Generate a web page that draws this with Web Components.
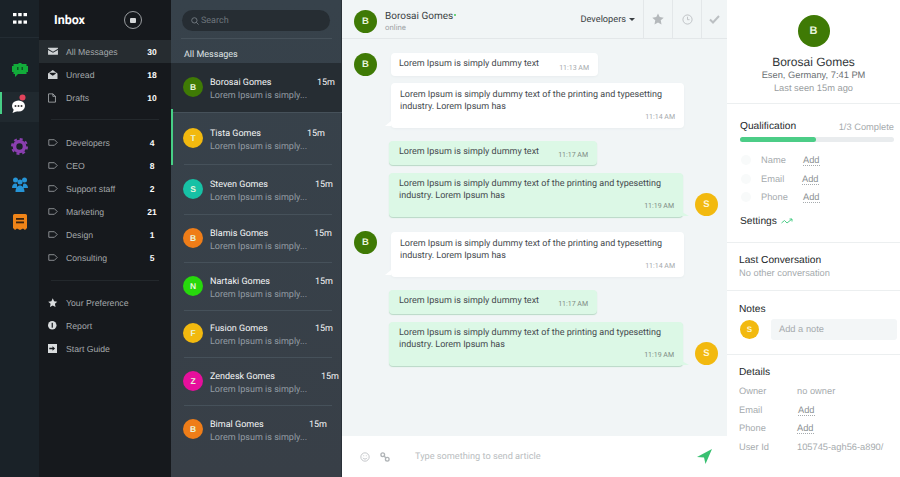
<!DOCTYPE html>
<html>
<head>
<meta charset="utf-8">
<title>Inbox</title>
<style>
  html, body { margin: 0; height: 100%; overflow: hidden; }
  body { font-family: Roboto, "Liberation Sans", sans-serif; text-rendering: geometricPrecision; }
</style>
</head>
<body>
<inbox-app></inbox-app>
<script>
const ICONS = {
  mail: `<svg viewBox="0 0 14 12" width="10" height="8.500"><path fill="#cfd2d4" d="M0 1h14v1.600L7 6.600 0 2.600zM0 4.200l7 4 7-4V11H0z"/></svg>`,
  open: `<svg viewBox="0 0 14 14" width="9.500" height="9.500"><path fill="#cfd2d4" d="M7 0l7 5v8.500H0V5zM2.600 5.600L7 8.300l4.400-2.700V4.200H2.600z"/></svg>`,
  draft: `<svg viewBox="0 0 12 14" width="8" height="10"><path fill="none" stroke="#cfd2d4" d="M.8.800h6.500l3.900 3.700v8.700H.8zM7.300.8v3.700h3.900"/></svg>`,
  tag: `<svg viewBox="0 0 14 10" width="10" height="7"><path fill="none" stroke="#a8acaf" stroke-width="1.100" d="M1 1h8l4 4-4 4H1z"/></svg>`,
  star: `<svg viewBox="0 0 14 14" width="9.500" height="9.500"><path fill="#d9dcde" d="M7 .5l2 4.300 4.700.6-3.500 3.200.9 4.700L7 11l-4.100 2.300.9-4.700L.3 5.400 5 4.800z"/></svg>`,
  info: `<svg viewBox="0 0 14 14" width="8.500" height="8.500"><circle cx="7" cy="7" r="7" fill="#d9dcde"/><rect x="6" y="3" width="2" height="8" fill="#16191d"/></svg>`,
  guide: `<svg viewBox="0 0 14 14" width="9" height="9"><path fill="#d9dcde" d="M0 0h14v14H0z"/><path fill="#16191d" d="M2 6h5V3.500L11 7l-4 3.500V8H2z"/></svg>`
};

// small round letter badge
customElements.define("letter-avatar", class extends HTMLElement {
  constructor() {
    super();
    this.attachShadow({ mode: "open" }).innerHTML = `
      <style>
        :host {
          display: flex; align-items: center; justify-content: center;
          flex: none; border-radius: 50%; color: #e8f5dc; font-weight: 700;
          font-family: "Liberation Sans", sans-serif;
          width: var(--size, 20px); height: var(--size, 20px);
          font-size: var(--font, 9px); background: var(--bg, #3f7a05);
        }
      </style><slot></slot>`;
  }
});

customElements.define("icon-rail", class extends HTMLElement {
  constructor() {
    super();
    this.attachShadow({ mode: "open" }).innerHTML = `
      <style>
        :host { display: flex; flex-direction: column; width: 39px; flex: none; background: #1a2228; }
        .grid { height: 37px; display: flex; align-items: center; justify-content: center; border-bottom: 1px solid #232c33; }
        .item { display: flex; align-items: center; justify-content: center; height: 30px; }
        .cur { margin: -1px 0 1px; background: #20292f linear-gradient(#47cf86, #47cf86) no-repeat 0 0 / 2px 22px; }
        .cur svg { margin-top: -7px; }
        .list { display: flex; flex-direction: column; gap: 8px; padding-top: 17px; }
      </style>
      <div class="grid">
        <svg width="14" height="11" viewBox="0 0 14 11" fill="#fff">
          <rect width="3.500" height="3.200"/><rect x="5.200" width="3.500" height="3.200"/><rect x="10.500" width="3.500" height="3.200"/>
          <rect y="7.500" width="3.500" height="3.200"/><rect x="5.200" y="7.500" width="3.500" height="3.200"/><rect x="10.500" y="7.500" width="3.500" height="3.200"/>
        </svg>
      </div>
      <div class="list">
        <div class="item">
          <svg width="16" height="14" viewBox="0 0 16 14"><path fill="#12ab3a" d="M1.500 1h5V0h3v1h5v2H16v6h-1.500v2H6l-3 3v-3H1.500V9H0V3h1.500z"/><rect x="5" y="4" width="1.500" height="3" fill="#0a5a20"/><rect x="9.500" y="4" width="1.500" height="3" fill="#0a5a20"/></svg>
        </div>
        <div class="item cur">
          <svg width="17" height="20" viewBox="0 0 17 20">
            <ellipse cx="7.500" cy="12" rx="6.500" ry="5.500" fill="#fff"/><path fill="#fff" d="M3 15l-1.500 4 5-2z"/>
            <circle cx="4.500" cy="12" r="1" fill="#333"/><circle cx="7.500" cy="12" r="1" fill="#333"/><circle cx="10.500" cy="12" r="1" fill="#333"/>
            <circle cx="11.500" cy="3.500" r="3" fill="#e2435b"/>
          </svg>
        </div>
        <div class="item">
          <svg width="17" height="17" viewBox="0 0 17 17"><circle cx="8.500" cy="8.500" r="5" fill="none" stroke="#8a3fb0" stroke-width="3.600"/><circle cx="8.500" cy="8.500" r="7.500" fill="none" stroke="#8a3fb0" stroke-width="2" stroke-dasharray="3 2.890"/></svg>
        </div>
        <div class="item">
          <svg width="16" height="15" viewBox="0 0 16 15" fill="#2694d6"><circle cx="3.500" cy="3" r="2.500"/><circle cx="12.500" cy="3" r="2.500"/><circle cx="8" cy="5" r="2.500"/><path d="M0 11c0-3 1.500-4.500 3.500-4.500S5 7.500 5 9v2zM11 9c0-1.500 0-2.500 1.500-2.500S16 8 16 11h-5zM3.500 15c0-4 2-6.500 4.500-6.500S12.500 11 12.500 15z"/></svg>
        </div>
        <div class="item">
          <svg width="14" height="17" viewBox="0 0 14 17"><path fill="#ef8418" d="M0 1.500A1.500 1.500 0 0 1 1.500 0h11A1.500 1.500 0 0 1 14 1.500V14l-2 2-2-1.500L7 16l-3-1.500L2 16l-2-2z"/><rect x="3" y="4" width="8" height="1.800" fill="#3a2410"/><rect x="3" y="7.500" width="8" height="1.800" fill="#3a2410"/></svg>
        </div>
      </div>`;
  }
});

customElements.define("nav-row", class extends HTMLElement {
  static observedAttributes = [ "count" ];
  constructor() {
    super();
    this.attachShadow({ mode: "open" }).innerHTML = `
      <style>
        :host {
          display: flex; align-items: center; height: 23px; padding: 0 9px 0 9px;
          color: #a3a7aa; font: 8.700px "Liberation Sans", sans-serif;
        }
        :host([active]) { background: #262c30; }
        .ic { width: 18px; display: flex; align-items: center; justify-content: flex-start; }
        .ic ::slotted(span) { display: flex; }
        .label { flex: 1; }
        .count { color: #fff; font-weight: 700; font-size: 8.500px; width: 20px; text-align: center; }
      </style>
      <span class="ic"><slot name="icon"></slot></span>
      <span class="label"><slot></slot></span>
      <span class="count"></span>`;
  }
  attributeChangedCallback(name, oldValue, newValue) {
    this.shadowRoot.querySelector(".count").textContent = newValue;
  }
});

customElements.define("nav-panel", class extends HTMLElement {
  constructor() {
    super();
    this.attachShadow({ mode: "open" }).innerHTML = `
      <style>
        :host { display: flex; flex-direction: column; width: 132px; flex: none; background: #16191d; }
        header { display: flex; align-items: center; height: 40px; padding-left: 15px; color: #fff; font: 700 12.500px Roboto, sans-serif; }
        header span { flex: 1; }
        .add { width: 18px; height: 18px; margin-right: 29px; border: 1px solid #9a9da0; border-radius: 50%; display: flex; align-items: center; justify-content: center; box-sizing: border-box; }
        .add i { width: 6px; height: 5px; background: #d5d7d8; border-radius: 1px; }
        hr { border: 0; border-top: 1px solid #23282c; margin: 10px 12px; }
      </style>
      <header><span>Inbox</span><div class="add"><i></i></div></header>
      <slot name="main"></slot>
      <hr style="margin-bottom:11px">
      <slot name="labels"></slot>
      <hr style="margin-top:11px;margin-bottom:10px">
      <slot name="links"></slot>`;
  }
});

customElements.define("conv-row", class extends HTMLElement {
  static observedAttributes = [ "name", "at", "letter", "color", "tall" ];
  constructor() {
    super();
    this.attachShadow({ mode: "open" }).innerHTML = `
      <style>
        :host {
          display: flex; align-items: center; box-sizing: border-box; height: var(--h, 48px);
          padding: 0 0 0 12px; position: relative; color: #fff;
          font: 9px Roboto, sans-serif;
        }
        :host([selected]) { background: #262d33; }
        :host([marked])::before { content: ""; position: absolute; left: 0; top: -4px; bottom: 0; width: 2px; background: #47cf86; z-index: 1; }
        .rule { position: absolute; left: 13px; right: 10px; bottom: 0; border-bottom: 1px solid #46515a; }
        :host([selected]) .rule { left: 0; right: 0; }
        :host([last]) .rule { display: none; }
        .txt { margin: 3px 0 0 7px; flex: 1; line-height: 13px; }
        .top { display: flex; }
        .name { color: #f4f5f6; width: var(--at, 105px); flex: none; }
        .when { color: #f4f5f6; }
        .sub { color: #939ca3; }
        letter-avatar { --size: 20px; --font: 8.500px; margin-top: -3px; }
      </style>
      <letter-avatar></letter-avatar>
      <div class="txt">
        <div class="top"><span class="name"></span><span class="when">15m</span></div>
        <div class="sub">Lorem Ipsum is simply...</div>
      </div>
      <div class="rule"></div>`;
  }
  attributeChangedCallback(name, oldValue, newValue) {
    const s = this.shadowRoot;
    switch (name) {
      case "name": s.querySelector(".name").textContent = newValue; break;
      case "letter": s.querySelector("letter-avatar").textContent = newValue; break;
      case "color": s.querySelector("letter-avatar").style.setProperty("--bg", newValue); break;
      case "at": this.style.setProperty("--at", newValue + "px"); break;
      case "tall": this.style.setProperty("--h", newValue + "px"); break;
    }
  }
});

customElements.define("conv-list", class extends HTMLElement {
  constructor() {
    super();
    this.attachShadow({ mode: "open" }).innerHTML = `
      <style>
        :host { display: flex; flex-direction: column; width: 171px; flex: none; background: linear-gradient(#37424b, #383f47); box-shadow: inset -1px 0 0 #2a3138; font-family: Roboto, sans-serif; }
        .search { margin: 10px 12px 0 11px; height: 21px; border-radius: 11px; background: #262d33; display: flex; align-items: center; padding-left: 9px; gap: 2px; color: #6d757c; font-size: 9px; }
        hr { border: 0; border-top: 1px solid #46515a; margin: 7px 10px 0; }
        .title { color: #dfe2e4; font-size: 9px; height: 24px; line-height: 32px; padding-left: 13px; }
      </style>
      <div class="search">
        <svg width="8" height="8" viewBox="0 0 9 9"><circle cx="3.800" cy="3.800" r="3" fill="none" stroke="#757d84"/><path d="M6 6l2.500 2.500" stroke="#757d84"/></svg>
        Search
      </div>
      <hr>
      <div class="title">All Messages</div>
      <slot></slot>`;
  }
});

customElements.define("msg-bubble", class extends HTMLElement {
  static observedAttributes = [ "time" ];
  constructor() {
    super();
    this.attachShadow({ mode: "open" }).innerHTML = `
      <style>
        :host {
          display: block; box-sizing: border-box; position: relative; border-radius: 4px;
          width: var(--w, 293px); padding: 6px 9px 6px 9px; background: #fff; color: #454a4e;
          font: 9px/12.300px Roboto, sans-serif; box-shadow: 0 1px 2px #e8edef;
        }
        :host([out]) { background: #dcf8e6; box-shadow: 0 1px 1px #b9d9c7; padding: 5px 9px 6px 10px; }
        :host([short]) { display: flex; height: 23px; padding: 5px 9px 0 8px; white-space: nowrap; }
        :host([short][out]) { height: 24px; padding-left: 10px; }
        .time { display: block; text-align: right; margin-top: -1px; color: #a5a9ac; font-size: 7px; line-height: 9px; }
        :host([out]) .time { color: #7e8b85; margin-top: 0; }
        :host([short]) .time { margin: 5.500px 0 0 auto; }
        .tail { display: none; position: absolute; bottom: 2px; }
        :host([tail]) .tail { display: block; left: -6px; border-bottom: 5px solid #fff; border-left: 6px solid transparent; }
        :host([tail][out]) .tail { left: auto; right: -6px; bottom: 1px; border-left: 0; border-right: 7px solid transparent; border-bottom: 4px solid #dcf8e6; }
      </style>
      <span><slot></slot></span><span class="time"></span><i class="tail"></i>`;
  }
  attributeChangedCallback(name, oldValue, newValue) {
    this.shadowRoot.querySelector(".time").textContent = newValue;
  }
});

customElements.define("msg-group", class extends HTMLElement {
  constructor() {
    super();
    this.attachShadow({ mode: "open" }).innerHTML = `
      <style>
        :host { display: flex; align-items: flex-start; padding-left: 12px; }
        :host([out]) { padding-left: 47px; align-items: flex-end; }
        .who { flex: none; width: 37px; }
        .stack { display: flex; flex-direction: column; gap: 7px; margin-top: var(--top, 0); }
        :host([out]) .stack { gap: 8px; }
        ::slotted([slot="who"]) { --size: 23px; --font: 9.500px; }
        :host([out]) .who { order: 2; width: auto; margin-left: 12px; margin-bottom: 1px; }
      </style>
      <div class="who"><slot name="who"></slot></div>
      <div class="stack"><slot></slot></div>`;
  }
});

customElements.define("chat-pane", class extends HTMLElement {
  constructor() {
    super();
    this.attachShadow({ mode: "open" }).innerHTML = `
      <style>
        :host { display: flex; flex-direction: column; flex: none; width: 385px; background: #f1f5f6; font-family: Roboto, sans-serif; }
        header { display: flex; align-items: stretch; flex: none; height: 39px; box-sizing: border-box; border-bottom: 1px solid #e3e7e9; padding-left: 12px; }
        .av { display: flex; align-items: center; padding-top: 4px; }
        .who { flex: 1; margin-left: 8px; padding-top: 11px; font-size: 10px; color: #3a3f43; line-height: 11px; }
        .who b { font-weight: 400; }
        .who i { display: inline-block; width: 2px; height: 2px; margin-left: 1px; background: #41c956; border-radius: 50%; vertical-align: 3px; }
        .who small { display: block; color: #9ea3a6; font-size: 7.800px; line-height: 11px; }
        letter-avatar { --size: 23px; --font: 9.500px; }
        .dd { font-size: 9.200px; color: #3a3f43; margin-right: 8px; display: flex; align-items: center; gap: 3px; }
        .dd i { border: 3px solid transparent; border-top: 3px solid #3a3f43; border-bottom: 0; margin-top: 1px; }
        .tool { width: 28px; border-left: 1px solid #e3e7e9; display: flex; align-items: center; justify-content: center; }
        .body { flex: 1; min-height: 0; display: flex; flex-direction: column; padding-top: 14px; }
        footer { flex: none; height: 41px; background: #fff; display: flex; align-items: center; padding-left: 18px; color: #b9bdc0; font-size: 9.200px; }
        footer span { flex: 1; margin-left: 25px; }
        footer svg { flex: none; }
      </style>
      <header>
        <div class="av"><letter-avatar>B</letter-avatar></div>
        <div class="who"><b>Borosai Gomes</b><i></i><small>online</small></div>
        <div class="dd">Developers<i></i></div>
        <div class="tool"><svg width="12" height="12" viewBox="0 0 14 14"><path fill="#b4b8bb" d="M7 .5l2 4.300 4.700.6-3.500 3.200.9 4.700L7 11l-4.100 2.300.9-4.700L.3 5.400 5 4.800z"/></svg></div>
        <div class="tool"><svg width="11" height="11" viewBox="0 0 12 12" fill="none" stroke="#bcc0c3"><circle cx="6" cy="6" r="5"/><path d="M6 3v3.200h2.200"/></svg></div>
        <div class="tool" style="width:25px"><svg width="11" height="9" viewBox="0 0 11 9" fill="none" stroke="#bcc0c3" stroke-width="2"><path d="M1 4.500l3 3 6-6.500"/></svg></div>
      </header>
      <div class="body"><slot></slot></div>
      <footer>
        <svg width="10" height="10" viewBox="0 0 12 12" fill="none" stroke="#b9bdc0"><circle cx="6" cy="6" r="5"/><path d="M3.500 7c1 2 4 2 5 0M4 4.500h1M7 4.500h1"/></svg>
        <svg style="margin-left:10px" width="10" height="10" viewBox="0 0 12 12" fill="none" stroke="#b0b4b7" stroke-width="1.600"><circle cx="3.300" cy="3.300" r="2.200"/><circle cx="8.700" cy="8.700" r="2.200"/><path d="M5 5l2 2"/></svg>
        <span>Type something to send article</span>
        <svg style="margin-right:15px" width="15" height="15" viewBox="0 0 15 15"><path fill="#39c071" d="M15 0L0 8l7 .5L8.500 15z"/></svg>
      </footer>`;
  }
});

customElements.define("info-section", class extends HTMLElement {
  constructor() {
    super();
    this.attachShadow({ mode: "open" }).innerHTML = `
      <style>
        :host { display: block; box-sizing: border-box; border-bottom: 1px solid #eceff0; padding: var(--pad, 12px 0 0 13px); height: var(--h, auto); }
        :host(:last-child) { border-bottom: 0; }
      </style><slot></slot>`;
  }
});

customElements.define("profile-pane", class extends HTMLElement {
  constructor() {
    super();
    this.attachShadow({ mode: "open" }).innerHTML = `
      <style>
        :host { display: flex; flex-direction: column; flex: 1; min-width: 0; background: #fff; font: 9.300px "Liberation Sans", sans-serif; color: #2c3033; }
      </style><slot></slot>`;
  }
});

customElements.define("kv-row", class extends HTMLElement {
  static observedAttributes = [ "key-name", "key-width" ];
  constructor() {
    super();
    this.attachShadow({ mode: "open" }).innerHTML = `
      <style>
        :host { display: flex; align-items: center; height: 18.500px; color: #a6abae; font-size: 9.300px; }
        .k { flex: none; }
        .dot { flex: none; width: 10px; height: 10px; border-radius: 50%; background: #f8fafa; margin: 0 10px 0 1px; display: none; }
        :host([dot]) .dot { display: block; }
        ::slotted(u) { color: #8c9194; text-decoration: none; border-bottom: 1px dotted #a6abae; }
      </style>
      <i class="dot"></i><span class="k"></span><span><slot></slot></span>`;
  }
  attributeChangedCallback(name, oldValue, newValue) {
    const k = this.shadowRoot.querySelector(".k");
    if (name === "key-name") k.textContent = newValue;
    else k.style.width = newValue + "px";
  }
});

customElements.define("inbox-app", class extends HTMLElement {
  constructor() {
    super();
    const rows = (list) => list.map(([t, c, i]) =>
      `<nav-row count="${c || ""}"><span slot="icon">${ICONS[i]}</span>${t}</nav-row>`).join("");
    this.attachShadow({ mode: "open" }).innerHTML = `
      <style>
        :host { display: flex; width: 900px; height: 477px; overflow: hidden; }
        div[slot] { display: block; }
        .t { font-size: 10.200px; color: #24282b; }
        .m { color: #a6abae; font-size: 9.300px; }
        letter-avatar.s { --bg: #f2b90f; color: #fff5cf; }
      </style>
      <icon-rail></icon-rail>
      <nav-panel>
        <div slot="main">
          <nav-row active count="30"><span slot="icon">${ICONS.mail}</span>All Messages</nav-row>
          ${rows([["Unread", 18, "open"], ["Drafts", 10, "draft"]])}
        </div>
        <div slot="labels">
          ${rows([["Developers", 4, "tag"], ["CEO", 8, "tag"], ["Support staff", 2, "tag"], ["Marketing", 21, "tag"], ["Design", 1, "tag"], ["Consulting", 5, "tag"]])}
        </div>
        <div slot="links">
          ${rows([["Your Preference", "", "star"], ["Report", "", "info"], ["Start Guide", "", "guide"]])}
        </div>
      </nav-panel>
      <conv-list>
        <conv-row selected name="Borosai Gomes" at="107" letter="B" color="#3f7a05" tall="50"></conv-row>
        <conv-row marked name="Tista Gomes" at="97" letter="T" color="#f2b90f" tall="52"></conv-row>
        <conv-row name="Steven Gomes" at="105" letter="S" color="#17c1a5" tall="50"></conv-row>
        <conv-row name="Blamis Gomes" at="104" letter="B" color="#ef7d18" tall="48"></conv-row>
        <conv-row name="Nartaki Gomes" at="105" letter="N" color="#27d80c" tall="48"></conv-row>
        <conv-row name="Fusion Gomes" at="105" letter="F" color="#f2b90f" tall="47"></conv-row>
        <conv-row name="Zendesk Gomes" at="111" letter="Z" color="#e60f9c" tall="48"></conv-row>
        <conv-row last name="Bimal Gomes" at="99" letter="B" color="#ef7d18" tall="48"></conv-row>
      </conv-list>
      <chat-pane>
        <msg-group>
          <letter-avatar slot="who">B</letter-avatar>
          <msg-bubble short time="11:13 AM" style="--w:207px">Lorem Ipsum is simply dummy text</msg-bubble>
          <msg-bubble tail time="11:14 AM">Lorem Ipsum is simply dummy text of the printing and typesetting industry. Lorem Ipsum has</msg-bubble>
        </msg-group>
        <msg-group out style="margin-top:13px">
          <letter-avatar slot="who" class="s">S</letter-avatar>
          <msg-bubble out short time="11:17 AM" style="--w:208px">Lorem Ipsum is simply dummy text</msg-bubble>
          <msg-bubble out tail time="11:19 AM" style="--w:294px">Lorem Ipsum is simply dummy text of the printing and typesetting industry. Lorem Ipsum has</msg-bubble>
        </msg-group>
        <msg-group style="margin-top:14px;--top:1px">
          <letter-avatar slot="who">B</letter-avatar>
          <msg-bubble tail time="11:14 AM">Lorem Ipsum is simply dummy text of the printing and typesetting industry. Lorem Ipsum has</msg-bubble>
        </msg-group>
        <msg-group out style="margin-top:13px">
          <letter-avatar slot="who" class="s">S</letter-avatar>
          <msg-bubble out short time="11:17 AM" style="--w:208px">Lorem Ipsum is simply dummy text</msg-bubble>
          <msg-bubble out tail time="11:19 AM" style="--w:294px">Lorem Ipsum is simply dummy text of the printing and typesetting industry. Lorem Ipsum has</msg-bubble>
        </msg-group>
      </chat-pane>
      <profile-pane>
        <info-section style="--h:104px;--pad:15px 0 0">
          <div style="display:flex;flex-direction:column;align-items:center;line-height:13px">
            <letter-avatar style="--size:32px;--font:11px">B</letter-avatar>
            <div style="font-size:12px;color:#33373a;margin-top:8px;line-height:14px">Borosai Gomes</div>
            <div style="margin-top:0;color:#6b7073">Esen, Germany, 7:41 PM</div>
            <div style="color:#999da0">Last seen 15m ago</div>
          </div>
        </info-section>
        <info-section style="--h:139px;--pad:17px 6px 0 13px">
          <div style="display:flex;justify-content:space-between;align-items:center">
            <span class="t">Qualification</span><span class="m">1/3 Complete</span>
          </div>
          <div style="height:5px;border-radius:3px;background:#e9ecee;margin-top:5px;margin-bottom:9px">
            <div style="height:5px;width:76px;border-radius:3px;background:#4ccd87"></div>
          </div>
          <kv-row dot key-name="Name" key-width="42"><u>Add</u></kv-row>
          <kv-row dot key-name="Email" key-width="41"><u>Add</u></kv-row>
          <kv-row dot key-name="Phone" key-width="42"><u>Add</u></kv-row>
          <div class="t" style="margin-top:9px;display:flex;align-items:center;gap:4px">Settings
            <svg width="12" height="7" viewBox="0 0 12 7" fill="none" stroke="#4ccd87"><path d="M.5 5L3.500 2.500 6 5 11 1M8.500 1H11V3.500"/></svg>
          </div>
        </info-section>
        <info-section style="--h:48px;--pad:12px 0 0 12px">
          <div class="t">Last Conversation</div>
          <div class="m" style="margin-top:2px">No other conversation</div>
        </info-section>
        <info-section style="--h:64px;--pad:13px 0 0 12px">
          <div class="t">Notes</div>
          <div style="display:flex;align-items:center;gap:12px;margin-top:4px">
            <letter-avatar class="s" style="--size:19px;--font:8px;margin-left:1px">S</letter-avatar>
            <div class="m" style="flex:1;height:21px;line-height:21px;background:#f3f6f7;border-radius:3px;padding-left:8px;margin-right:3px">Add a note</div>
          </div>
        </info-section>
        <info-section style="--pad:12px 0 0 12px">
          <div class="t" style="margin-bottom:4px">Details</div>
          <kv-row key-name="Owner" key-width="58">no owner</kv-row>
          <kv-row key-name="Email" key-width="59"><u>Add</u></kv-row>
          <kv-row key-name="Phone" key-width="58"><u>Add</u></kv-row>
          <kv-row key-name="User Id" key-width="58">105745-agh56-a890/</kv-row>
        </info-section>
      </profile-pane>`;
  }
});
</script>
</body>
</html>
